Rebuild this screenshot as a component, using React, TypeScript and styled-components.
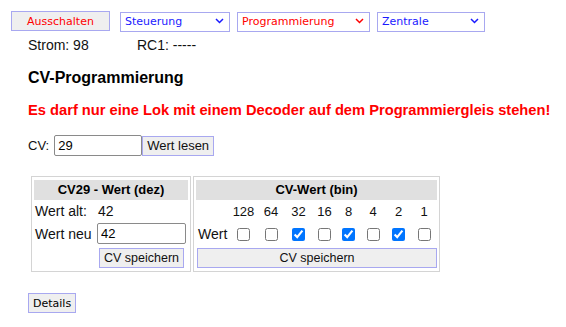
import React from "react";
import styled, { createGlobalStyle } from "styled-components";

const Global = createGlobalStyle`
  html, body { margin: 0; padding: 0; background: #fff; }
  body { font-family: "Liberation Sans", Arial, sans-serif; color: #000; }
  * { box-sizing: border-box; }
`;

const Page = styled.div`
  width: 566px;
  height: 327px;
  overflow: hidden;
`;

const TopBar = styled.div`
  display: flex;
  align-items: center;
  padding: 11px 0 0 11px;
`;

const TopButton = styled.button`
  width: 99px;
  height: 20px;
  margin-right: 10px;
  padding: 0;
  background: #efefef;
  border: 1px solid #a8a8f0;
  color: #ff0000;
  font-family: "DejaVu Sans", Verdana, sans-serif;
  font-size: 11px;
`;

const SelectWrap = styled.div<{ $w: number }>`
  position: relative;
  width: ${(p) => p.$w}px;
  height: 20px;
  margin-right: 7px;
`;

const Select = styled.select<{ $color: string }>`
  appearance: none;
  width: 100%;
  height: 100%;
  margin: 0;
  padding: 0 0 0 4px;
  background: #fff;
  border: 1px solid #a8a8f0;
  border-radius: 0;
  color: ${(p) => p.$color};
  font-family: "DejaVu Sans", Verdana, sans-serif;
  font-size: 11px;
  outline: none;
`;

const Chevron = styled.svg`
  position: absolute;
  right: 6px;
  top: 7px;
  pointer-events: none;
`;

const StatusRow = styled.div`
  display: flex;
  margin: 6px 0 0 28px;
  font-size: 14px;
  line-height: 16px;
  color: #111;
`;

const StatusItem = styled.span<{ $w?: number }>`
  width: ${(p) => (p.$w ? `${p.$w}px` : "auto")};
`;

const Main = styled.div`
  padding-left: 28px;
`;

const Heading = styled.h2`
  margin: 15px 0 0 0;
  font-size: 16px;
  line-height: 19px;
  font-weight: bold;
  color: #000;
`;

const Warning = styled.p`
  margin: 15px 0 0 0;
  font-size: 14.7px;
  line-height: 17px;
  font-weight: bold;
  color: #ff0000;
`;

const CvRow = styled.div`
  display: flex;
  align-items: center;
  margin-top: 16px;
  font-size: 13px;
`;

const CvLabel = styled.span`
  margin-right: 5px;
  color: #111;
`;

const TextInput = styled.input<{ $w: number }>`
  width: ${(p) => p.$w}px;
  height: 21px;
  margin: 0;
  padding: 0 3px;
  border: 1px solid #8a8a8a;
  border-radius: 2px;
  font-family: "Liberation Sans", Arial, sans-serif;
  font-size: 13px;
  color: #000;
  background: #fff;
`;

const Button = styled.button<{ $full?: boolean; $font?: number }>`
  height: 20px;
  margin: 0;
  padding: 0 4px;
  width: ${(p) => (p.$full ? "100%" : "auto")};
  background: #efefef;
  border: 1px solid #a8a8f0;
  border-radius: 0;
  font-family: "Liberation Sans", Arial, sans-serif;
  font-size: ${(p) => p.$font ?? 13}px;
  color: #111;
`;

const Panels = styled.div`
  display: flex;
  align-items: flex-start;
  gap: 2px;
  margin: 20px 0 0 3px;
`;

const Panel = styled.div<{ $cols: string }>`
  display: grid;
  grid-template-columns: ${(p) => p.$cols};
  row-gap: 2px;
  padding: 3px 2px 2px 2px;
  border: 1px solid #d4d4d4;
`;

const PanelHeader = styled.div`
  grid-column: 1 / -1;
  height: 20px;
  line-height: 20px;
  background: #e0e0e0;
  text-align: center;
  font-weight: bold;
  font-size: 13px;
  color: #000;
`;

const Cell = styled.div<{ $h: number; $align?: string; $size?: number; $pl?: number; $pr?: number }>`
  height: ${(p) => p.$h}px;
  display: flex;
  align-items: center;
  justify-content: ${(p) => p.$align ?? "flex-start"};
  padding-left: ${(p) => p.$pl ?? 0}px;
  padding-right: ${(p) => p.$pr ?? 0}px;
  font-size: ${(p) => p.$size ?? 14}px;
  color: #111;
  white-space: nowrap;
`;

const FullCell = styled.div`
  grid-column: 1 / -1;
  height: 22px;
  display: flex;
  align-items: center;
  padding: 0 0 0 1px;
`;

const Check = styled.input`
  width: 13px;
  height: 13px;
  margin: 0;
`;

const DetailsButton = styled.button`
  display: block;
  margin: 21px 0 0 0;
  height: 20px;
  padding: 0 4px;
  background: #efefef;
  border: 1px solid #a8a8f0;
  border-radius: 0;
  font-family: "DejaVu Sans", Verdana, sans-serif;
  font-size: 11px;
  color: #000;
`;

const ChevronIcon = ({ color }: { color: string }) => (
  <Chevron width="9" height="6" viewBox="0 0 9 6">
    <path d="M1 1 L4.5 4.5 L8 1" fill="none" stroke={color} strokeWidth="1.5" />
  </Chevron>
);

const bits = [128, 64, 32, 16, 8, 4, 2, 1];
const value = 42;

export default function App() {
  return (
    <Page>
      <Global />
      <TopBar>
        <TopButton>Ausschalten</TopButton>
        <SelectWrap $w={110}>
          <Select $color="#1a1aff" defaultValue="s">
            <option value="s">Steuerung</option>
          </Select>
          <ChevronIcon color="#1a1aff" />
        </SelectWrap>
        <SelectWrap $w={133}>
          <Select $color="#ff0000" defaultValue="p">
            <option value="p">Programmierung</option>
          </Select>
          <ChevronIcon color="#ff0000" />
        </SelectWrap>
        <SelectWrap $w={108}>
          <Select $color="#1a1aff" defaultValue="z">
            <option value="z">Zentrale</option>
          </Select>
          <ChevronIcon color="#1a1aff" />
        </SelectWrap>
      </TopBar>
      <StatusRow>
        <StatusItem $w={109}>Strom: 98</StatusItem>
        <StatusItem>RC1: -----</StatusItem>
      </StatusRow>
      <Main>
        <Heading>CV-Programmierung</Heading>
        <Warning>Es darf nur eine Lok mit einem Decoder auf dem Programmiergleis stehen!</Warning>
        <CvRow>
          <CvLabel>CV:</CvLabel>
          <TextInput $w={88} defaultValue="29" />
          <Button>Wert lesen</Button>
        </CvRow>
        <Panels>
          <Panel $cols="63px 91px">
            <PanelHeader>CV29 - Wert (dez)</PanelHeader>
            <Cell $h={18} $pl={1}>Wert alt:</Cell>
            <Cell $h={18} $pl={1}>42</Cell>
            <Cell $h={23} $pl={1}>Wert neu</Cell>
            <Cell $h={23}>
              <TextInput $w={89} defaultValue="42" />
            </Cell>
            <Cell $h={22} />
            <Cell $h={22} $align="flex-end" $pr={4}>
              <Button $font={12.5}>CV speichern</Button>
            </Cell>
          </Panel>
          <Panel $cols="34px 27px 28px 27px 25px 23px 26px 25px 26px">
            <PanelHeader>CV-Wert (bin)</PanelHeader>
            <Cell $h={19} />
            {bits.map((b) => (
              <Cell key={`n${b}`} $h={19} $align="center" $size={13}>
                {b}
              </Cell>
            ))}
            <Cell $h={22} $pl={2}>Wert</Cell>
            {bits.map((b) => (
              <Cell key={`c${b}`} $h={22} $align="center">
                <Check type="checkbox" defaultChecked={(value & b) !== 0} />
              </Cell>
            ))}
            <FullCell>
              <Button $full $font={12.5}>CV speichern</Button>
            </FullCell>
          </Panel>
        </Panels>
        <DetailsButton>Details</DetailsButton>
      </Main>
    </Page>
  );
}
